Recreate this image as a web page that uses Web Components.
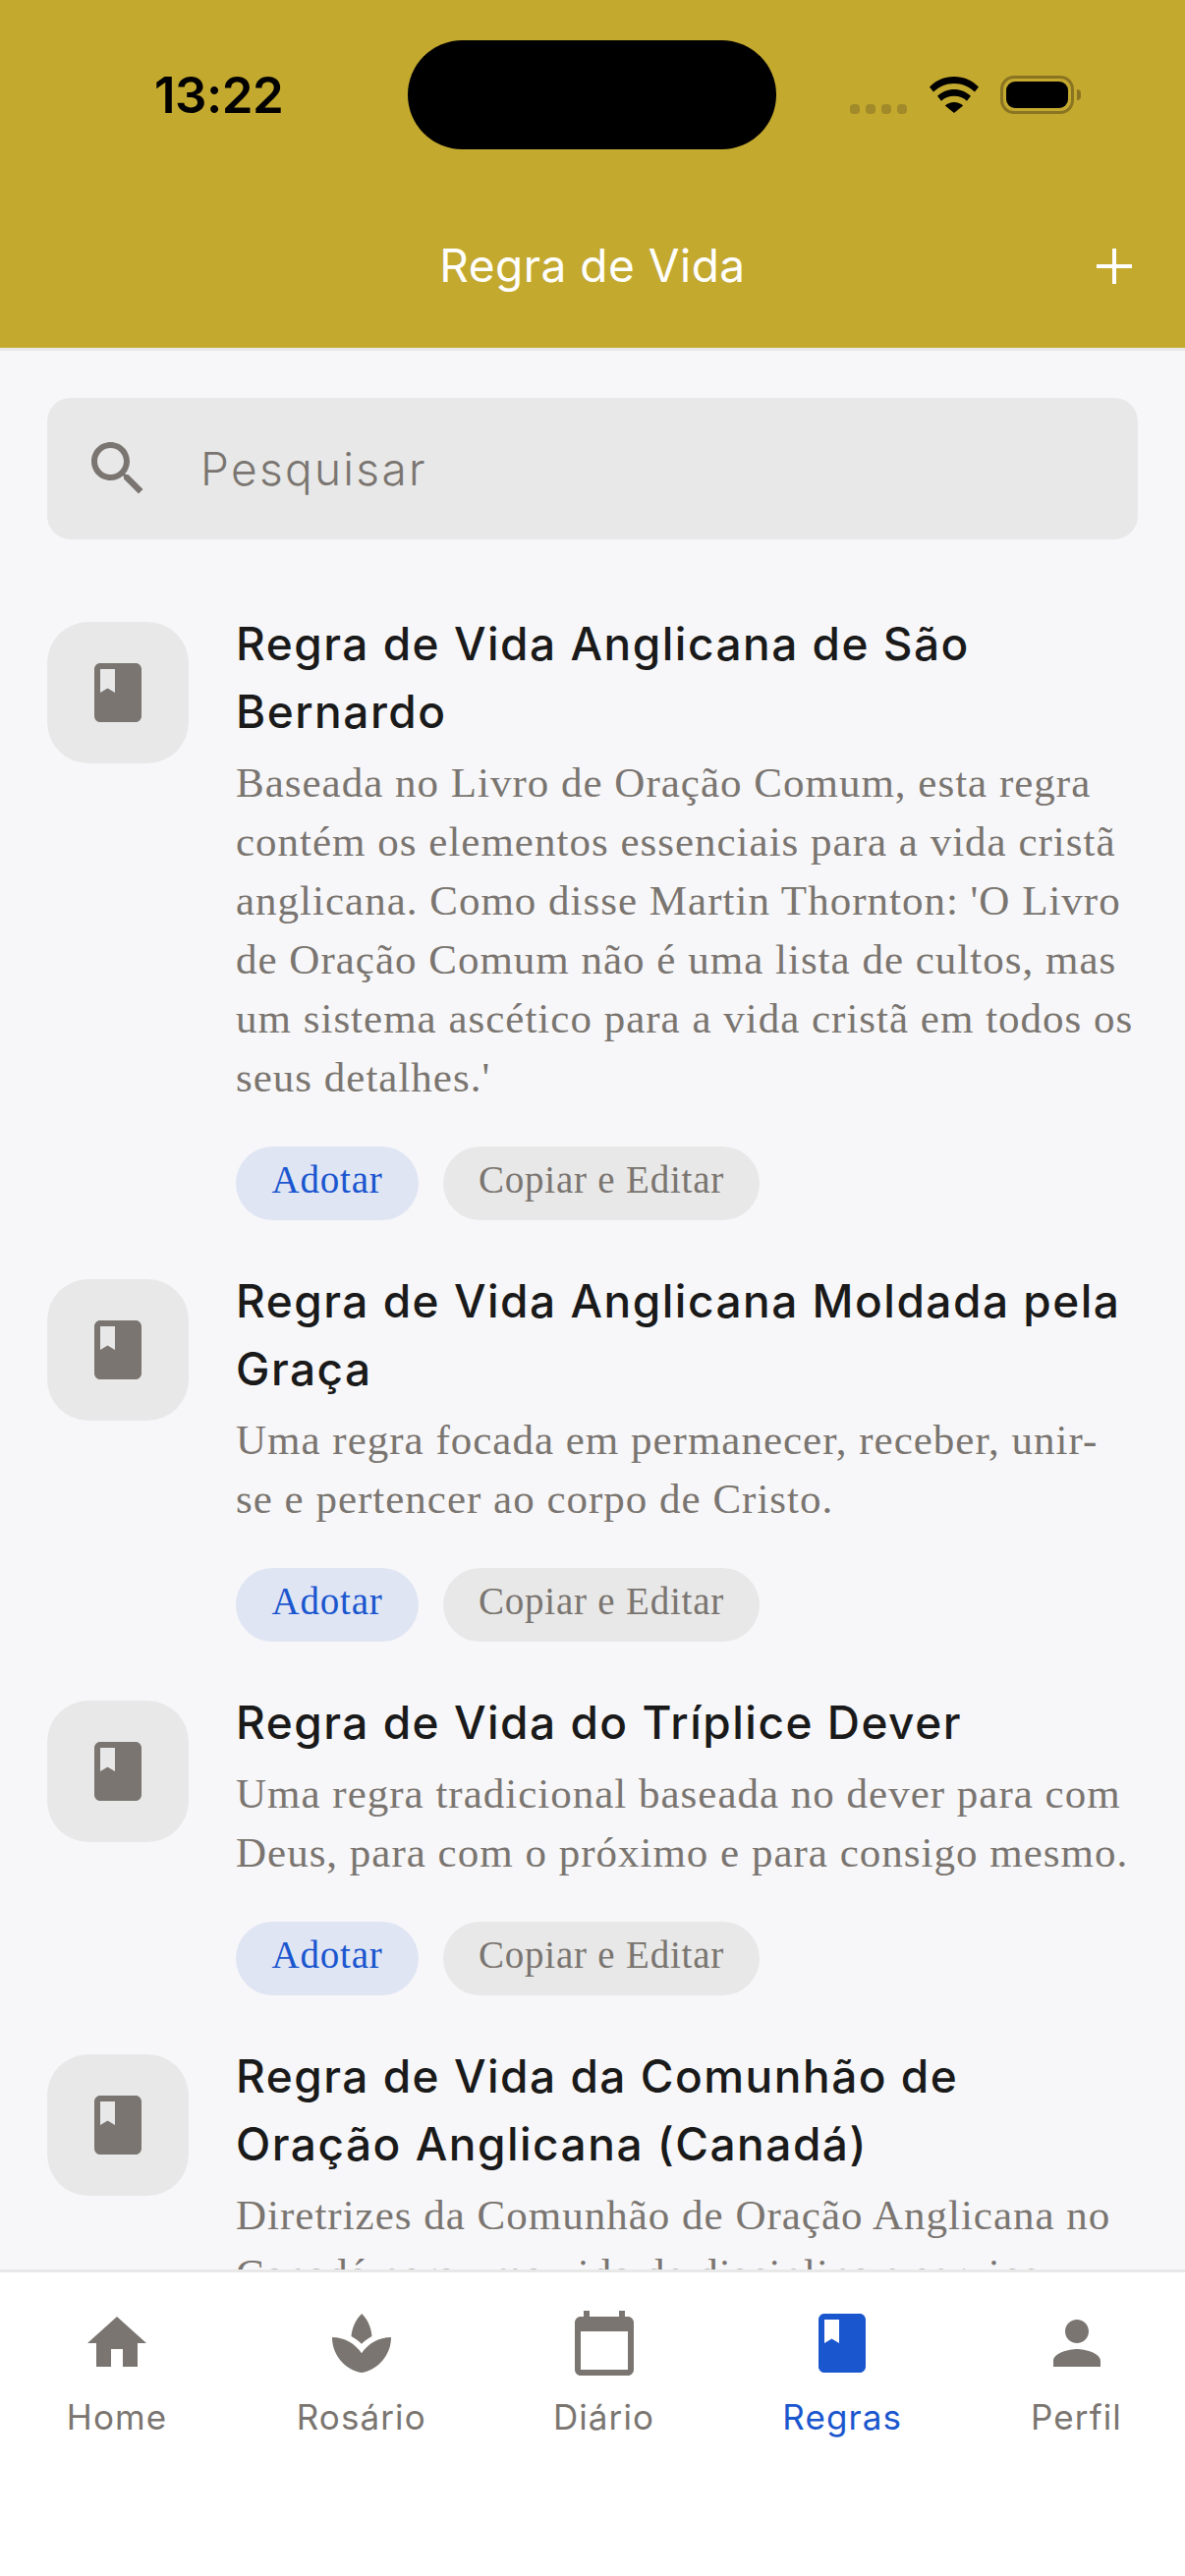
<!DOCTYPE html>
<html lang="pt">
<head>
<meta charset="utf-8">
<title>Regra de Vida</title>
<style>
  html, body { margin: 0; padding: 0; }
  body { width: 1206px; height: 2622px; overflow: hidden; background: #F7F7F9; }
  rules-screen > status-bar, rules-screen > app-header { background: #C4A92F; }
</style>
</head>
<body>
<rules-screen>
  <status-bar slot="top" time="13:22"></status-bar>
  <app-header slot="top">Regra de Vida</app-header>
  <search-field placeholder="Pesquisar"></search-field>
  <rule-card>
    <span slot="title">Regra de Vida Anglicana de São<br>Bernardo</span>
    Baseada no Livro de Oração Comum, esta regra<br>contém os elementos essenciais para a vida cristã<br>anglicana. Como disse Martin Thornton: 'O Livro<br>de Oração Comum não é uma lista de cultos, mas<br>um sistema ascético para a vida cristã em todos os<br>seus detalhes.'
  </rule-card>
  <rule-card>
    <span slot="title">Regra de Vida Anglicana Moldada pela<br>Graça</span>
    Uma regra focada em permanecer, receber, unir-<br>se e pertencer ao corpo de Cristo.
  </rule-card>
  <rule-card>
    <span slot="title">Regra de Vida do Tríplice Dever</span>
    Uma regra tradicional baseada no dever para com<br>Deus, para com o próximo e para consigo mesmo.
  </rule-card>
  <rule-card>
    <span slot="title">Regra de Vida da Comunhão de<br>Oração Anglicana (Canadá)</span>
    Diretrizes da Comunhão de Oração Anglicana no<br>Canadá para uma vida de disciplina e serviço.
  </rule-card>
  <tab-bar slot="bottom">
    <tab-item icon="home" w="102">Home</tab-item>
    <tab-item icon="spa" w="126">Rosário</tab-item>
    <tab-item icon="calendar" w="98">Diário</tab-item>
    <tab-item icon="book" w="118" active>Regras</tab-item>
    <tab-item icon="person" w="89">Perfil</tab-item>
  </tab-bar>
</rules-screen>

<script>
const ICONS = {
  home: 'M10 20v-6h4v6h5v-8h3L12 3 2 12h3v8z',
  spa: 'M15.49 9.63c-.18-2.79-1.31-5.51-3.43-7.63-2.14 2.14-3.32 4.86-3.55 7.63 1.28.68 2.46 1.56 3.49 2.63 1.03-1.06 2.21-1.94 3.49-2.63zM12 15.45C9.85 12.17 6.18 10 2 10c0 5.32 3.36 9.82 8.03 11.49.63.23 1.29.4 1.97.51.68-.12 1.33-.29 1.97-.51C18.64 19.82 22 15.32 22 10c-4.18 0-7.85 2.17-10 5.45z',
  calendar: 'M20 3h-1V1h-2v2H7V1H5v2H4c-1.1 0-2 .9-2 2v16c0 1.1.9 2 2 2h16c1.1 0 2-.9 2-2V5c0-1.1-.9-2-2-2zm0 18H4V8h16v13z',
  book: 'M18 2H6c-1.1 0-2 .9-2 2v16c0 1.1.9 2 2 2h12c1.1 0 2-.9 2-2V4c0-1.1-.9-2-2-2zM6 4h5v8l-2.5-1.5L6 12V4z',
  person: 'M12 12c2.21 0 4-1.79 4-4s-1.79-4-4-4-4 1.79-4 4 1.79 4 4 4zm0 2c-2.67 0-8 1.34-8 4v2h16v-2c0-2.66-5.33-4-8-4z',
  search: 'M15.5 14h-.79l-.28-.27C15.41 12.59 16 11.11 16 9.5 16 5.91 13.09 3 9.5 3S3 5.91 3 9.5 5.91 16 9.5 16c1.61 0 3.09-.59 4.23-1.57l.27.28v.79l5 4.99L20.49 19l-4.99-5zm-6 0C7.01 14 5 11.99 5 9.5S7.01 5 9.5 5 14 7.01 14 9.5 11.99 14 9.5 14z'
};

const svgIcon = function(name, size){
  return `<svg width="${size}" height="${size}" viewBox="0 0 24 24" fill="currentColor" style="display:block"><path fill-rule="evenodd" d="${ICONS[name]}"/></svg>`;
}

class RulesScreen extends HTMLElement {
  constructor() {
    super();
    this.attachShadow({ mode: "open" }).innerHTML = `
      <style>
        :host { display: flex; flex-direction: column; width: 1206px; height: 2622px; overflow: hidden; }
        main { flex: 1; min-height: 0; overflow: hidden; padding: 48px 48px 0; display: flex; flex-direction: column; }
      </style>
      <slot name="top"></slot>
      <main><slot></slot></main>
      <slot name="bottom"></slot>
    `;
  }
}

class StatusBar extends HTMLElement {
  constructor() {
    super();
    this.attachShadow({ mode: "open" }).innerHTML = `
      <style>
        :host { display: flex; align-items: center; height: 111px; padding: 41px 0 0 157px; }
        .time { width: 258px; font: 600 51px/1 Inter, "Liberation Sans", sans-serif; letter-spacing: -0.5px; color: #000; }
        .island { width: 375px; height: 111px; border-radius: 56px; background: #000; }
        .dots { display: flex; gap: 6px; align-self: flex-end; margin: 0 23px 36px 75px; }
        .dots i { width: 10px; height: 10px; border-radius: 4px; background: #A18A29; }
        .batt { position: relative; box-sizing: border-box; width: 75px; height: 39px; margin-left: 22px; padding: 3px; border: 3px solid #8A7421; border-radius: 14px; }
        .batt b { display: block; height: 100%; border-radius: 9px; background: #000; }
        .batt::after { content: ""; position: absolute; left: 75px; top: 11px; width: 4px; height: 11px; border-radius: 0 5px 5px 0; background: #8A7421; }
      </style>
      <div class="time">${this.getAttribute("time")}</div>
      <div class="island"></div>
      <div class="dots"><i></i><i></i><i></i><i></i></div>
      <svg width="50" height="37" viewBox="0 0 50 37" fill="#000">
        <path d="M25 0C15 0 6.500 4 0 10.500L4 15.500C9.500 10.300 17 7 25 7s15.500 3.300 21 8.500l4-5C43.500 4 35 0 25 0z"/>
        <path d="M25 13c-6.500 0-12.500 2.600-17 6.800l4 5C15.300 21.600 20 19.800 25 19.800s9.700 1.800 13 5l4-5C37.500 15.600 31.500 13 25 13z"/>
        <path d="M25 26c-3.500 0-6.800 1.400-9.200 3.500L25 37l9.200-7.500C31.800 27.400 28.500 26 25 26z"/>
      </svg>
      <div class="batt"><b></b></div>
    `;
  }
}

class AppHeader extends HTMLElement {
  constructor() {
    super();
    this.attachShadow({ mode: "open" }).innerHTML = `
      <style>
        :host { display: grid; grid-template-columns: 1fr auto 1fr; align-items: center; height: 202px; border-bottom: 3px solid #E8E8E8; color: #fff; }
        .title { grid-column: 2; font: 400 46px/1 Inter, "Liberation Sans", sans-serif; letter-spacing: 0.5px; margin-top: 34px; }
        svg { grid-column: 3; justify-self: end; margin: 36px 54px 0 0; display: block; }
      </style>
      <div class="title"><slot></slot></div>
      <svg width="36" height="36" viewBox="0 0 36 36" stroke="#fff" stroke-width="4"><path d="M18 0v36M0 18h36"/></svg>
    `;
  }
}

class SearchField extends HTMLElement {
  constructor() {
    super();
    this.attachShadow({ mode: "open" }).innerHTML = `
      <style>
        :host { display: flex; align-items: center; gap: 48px; height: 144px; flex: none; padding-left: 36px; border-radius: 24px; background: #E8E8E8; color: #7A7570; margin-bottom: 72px; }
        span { font: 300 46px/1 Inter, "Liberation Sans", sans-serif; letter-spacing: 2.3px; }
      </style>
      ${svgIcon("search", 72)}
      <span>${this.getAttribute("placeholder")}</span>
    `;
  }
}

class RuleCard extends HTMLElement {
  constructor() {
    super();
    this.attachShadow({ mode: "open" }).innerHTML = `
      <style>
        :host { display: grid; grid-template-columns: 144px 1fr; column-gap: 48px; flex: none; margin-bottom: 48px; white-space: nowrap; }
        .thumb { display: flex; align-items: center; justify-content: center; width: 144px; height: 144px; margin-top: 12px; border-radius: 42px; background: #E8E8E8; color: #7A7570; }
        h2 { margin: 0 0 9px; font: 500 46px/69px Inter, "Liberation Sans", sans-serif; letter-spacing: 1.5px; color: #1A1A1A; }
        p { margin: 0; font: 400 43px/60px "Liberation Serif", serif; letter-spacing: 1px; color: #7A7570; position: relative; top: -1px; }
        .actions { display: flex; gap: 25px; margin-top: 39px; }
        button { height: 75px; padding: 0 0 8px; border: 0; border-radius: 38px; font: 400 39px/1 "Liberation Serif", serif; letter-spacing: 0.8px; }
        .adopt { width: 186px; background: #E0E5F4; color: #1A56CE; }
        .copy { width: 322px; background: #E8E8E8; color: #7A7570; }
      </style>
      <div class="thumb">${svgIcon("book", 72)}</div>
      <div>
        <h2><slot name="title"></slot></h2>
        <p><slot></slot></p>
        <div class="actions">
          <button class="adopt">Adotar</button>
          <button class="copy">Copiar e Editar</button>
        </div>
      </div>
    `;
  }
}

class TabBar extends HTMLElement {
  constructor() {
    super();
    this.attachShadow({ mode: "open" }).innerHTML = `
      <style>
        :host { display: flex; justify-content: space-between; flex: none; box-sizing: border-box; height: 312px; padding: 36px 66px 0 68px; border-top: 3px solid #E8E8E8; background: #fff; }
      </style>
      <slot></slot>
    `;
  }
}

class TabItem extends HTMLElement {
  constructor() {
    super();
    let color = this.hasAttribute("active") ? "#1A56CE" : "#7A7570";
    this.attachShadow({ mode: "open" }).innerHTML = `
      <style>
        :host { display: flex; flex-direction: column; align-items: center; width: ${this.getAttribute("w")}px; color: ${color}; }
        span { margin-top: 17px; font: 400 35px/44px Inter, "Liberation Sans", sans-serif; letter-spacing: 1.1px; white-space: nowrap; }
      </style>
      ${svgIcon(this.getAttribute("icon"), 72)}
      <span><slot></slot></span>
    `;
  }
}

customElements.define("rules-screen", RulesScreen);
customElements.define("status-bar", StatusBar);
customElements.define("app-header", AppHeader);
customElements.define("search-field", SearchField);
customElements.define("rule-card", RuleCard);
customElements.define("tab-bar", TabBar);
customElements.define("tab-item", TabItem);
</script>
</body>
</html>
